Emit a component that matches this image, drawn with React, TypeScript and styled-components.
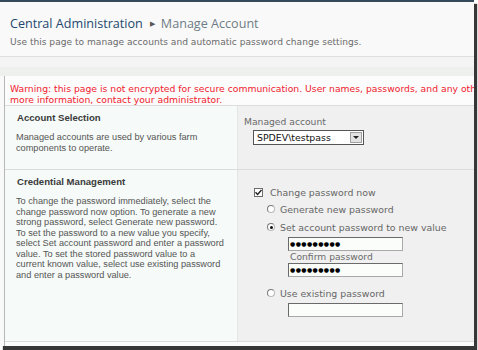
import React from "react";
import styled, { createGlobalStyle } from "styled-components";

const Global = createGlobalStyle`
  html, body { margin: 0; padding: 0; background: #ffffff; }
  body { width: 478px; height: 350px; overflow: hidden; }
`;

const Frame = styled.div`
  width: 474px;
  height: 346px;
  box-sizing: border-box;
  border-top: 2px solid #34495a;
  background: #f8f9f8;
  box-shadow: 3px 4px 1px rgba(20, 20, 20, 0.85);
  overflow: hidden;
  display: flex;
  flex-direction: column;
  font-family: "DejaVu Sans", Verdana, sans-serif;
`;

const Header = styled.div`
  height: 55px;
  box-sizing: border-box;
  padding: 13px 0 0 10px;
  background: #f9f9f9;
  border-bottom: 1px solid #dedede;
`;

const Title = styled.div`
  font-family: "Open Sans", "Noto Sans", sans-serif;
  font-size: 12.6px;
  line-height: 18px;
  color: #6f7c86;
  white-space: nowrap;
`;

const Crumb = styled.span`
  color: #23486e;
`;

const Sep = styled.span`
  font-size: 7px;
  color: #555;
  margin: 0 6px 0 7px;
  vertical-align: 2px;
`;

const Subtitle = styled.div`
  font-size: 9.1px;
  line-height: 12px;
  margin-top: 3px;
  color: #6b6b6b;
  white-space: nowrap;
`;

const Band = styled.div`
  height: 19px;
  background: linear-gradient(#f3f4f3 0, #f3f4f3 10px, #edf0ed 10px, #edf0ed 100%);
`;

const Content = styled.div`
  flex: 1;
  margin-left: 4px;
  border-left: 1px solid #b4b8b8;
  background: #fbfcfb;
  display: flex;
  flex-direction: column;
`;

const Warning = styled.div`
  padding: 8px 0 0 5px;
  height: 30px;
  box-sizing: border-box;
  color: #f0202e;
  font-size: 9.25px;
  line-height: 10.5px;
  white-space: nowrap;
  overflow: hidden;
  border-bottom: 1px solid #dcdcdc;
`;

const Section = styled.div<{ $h: number }>`
  display: grid;
  grid-template-columns: 232px 1fr;
  height: ${(p) => p.$h}px;
  border-bottom: 1px solid #dcdcdc;
`;

const Left = styled.div`
  background: #f6faf8;
  padding: 6px 8px 0 11px;
  font-family: "Liberation Sans", Arial, sans-serif;
`;

const Right = styled.div`
  background: #f0f0f0;
  padding: 0 0 0 6px;
  border-left: 1px solid #e4e4e4;
`;

const SecTitle = styled.div`
  font-weight: bold;
  font-size: 9.6px;
  color: #3a3a3a;
  line-height: 12px;
  margin-left: 1px;
`;

const SecText = styled.div`
  font-size: 9.2px;
  color: #555;
  line-height: 10.5px;
  margin-top: 8px;
`;

const Label = styled.div<{ $indent?: number; $top?: number }>`
  font-size: 9.2px;
  line-height: 12px;
  color: #6a6a6a;
  margin-left: ${(p) => p.$indent ?? 0}px;
  margin-top: ${(p) => p.$top ?? 0}px;
  white-space: nowrap;
`;

const Select = styled.div`
  margin: 2px 0 0 9px;
  width: 111px;
  height: 15px;
  box-sizing: border-box;
  border: 1px solid #555;
  background: #fff;
  display: flex;
  align-items: center;
  font-size: 9.4px;
  color: #111;
  padding-left: 3px;
`;

const SelectText = styled.span`
  flex: 1;
`;

const DropBtn = styled.span`
  width: 12px;
  height: 11px;
  margin-right: 1px;
  background: #e2e2e2;
  border: 1px solid #a0a0a0;
  box-sizing: border-box;
  display: flex;
  align-items: center;
  justify-content: center;
  &::after {
    content: "";
    border-left: 3px solid transparent;
    border-right: 3px solid transparent;
    border-top: 3px solid #222;
  }
`;

const OptRow = styled.div<{ $indent: number; $top: number }>`
  display: flex;
  align-items: center;
  margin-left: ${(p) => p.$indent}px;
  margin-top: ${(p) => p.$top}px;
  height: 12px;
  font-size: 9.4px;
  color: #666;
  white-space: nowrap;
`;

const Check = styled.span`
  width: 9px;
  height: 9px;
  box-sizing: border-box;
  border: 1px solid #6e6e6e;
  background: #fff;
  margin-right: 7px;
  display: flex;
  align-items: center;
  justify-content: center;
`;

const Radio = styled.span<{ $on?: boolean }>`
  width: 8px;
  height: 8px;
  box-sizing: border-box;
  border-radius: 50%;
  border: 1px solid #b8b8b8;
  border-top-color: #7a7a7a;
  border-left-color: #7a7a7a;
  background: #fff;
  margin-right: 5px;
  display: flex;
  align-items: center;
  justify-content: center;
  &::after {
    content: "";
    width: 3px;
    height: 3px;
    border-radius: 50%;
    background: ${(p) => (p.$on ? "#111" : "transparent")};
  }
`;

const Input = styled.div<{ $top: number }>`
  margin: ${(p) => p.$top}px 0 0 44px;
  width: 115px;
  height: 14px;
  box-sizing: border-box;
  border: 1px solid #a8a8a8;
  border-top-color: #6a6a6a;
  border-left-color: #6a6a6a;
  background: #fbfdfb;
  font-size: 6px;
  letter-spacing: 0.4px;
  color: #000;
  line-height: 12px;
  padding-left: 1px;
  font-family: "DejaVu Sans", sans-serif;
`;

export default function App() {
  return (
    <>
      <Global />
      <Frame>
        <Header>
          <Title>
            <Crumb>Central Administration</Crumb>
            <Sep>▶</Sep>Manage Account
          </Title>
          <Subtitle>Use this page to manage accounts and automatic password change settings.</Subtitle>
        </Header>
        <Band />
        <Content>
          <Warning>
            <div>
              Warning: this page is not encrypted for secure communication. User names, passwords, and any other
            </div>
            <div>more information, contact your administrator.</div>
          </Warning>
          <Section $h={63}>
            <Left>
              <SecTitle>Account Selection</SecTitle>
              <SecText>
                Managed accounts are used by various farm
                <br />
                components to operate.
              </SecText>
            </Left>
            <Right>
              <Label $top={10}>Managed account</Label>
              <Select>
                <SelectText>SPDEV\testpass</SelectText>
                <DropBtn />
              </Select>
            </Right>
          </Section>
          <Section $h={171}>
            <Left>
              <SecTitle>Credential Management</SecTitle>
              <SecText>
                To change the password immediately, select the
                <br />
                change password now option. To generate a new
                <br />
                strong password, select Generate new password.
                <br />
                To set the password to a new value you specify,
                <br />
                select Set account password and enter a password
                <br />
                value. To set the stored password value to a
                <br />
                current known value, select use existing password
                <br />
                and enter a password value.
              </SecText>
            </Left>
            <Right>
              <OptRow $indent={10} $top={16}>
                <Check>
                  <svg width="7" height="7" viewBox="0 0 7 7">
                    <path d="M0.5 3.2 L2.6 5.4 L6.5 1" stroke="#222" strokeWidth="1.4" fill="none" />
                  </svg>
                </Check>
                Change password now
              </OptRow>
              <OptRow $indent={23} $top={5}>
                <Radio />
                Generate new password
              </OptRow>
              <OptRow $indent={23} $top={6}>
                <Radio $on />
                Set account password to new value
              </OptRow>
              <Input $top={4}>●●●●●●●●●</Input>
              <Label $indent={46} $top={0}>Confirm password</Label>
              <Input $top={0}>●●●●●●●●●</Input>
              <OptRow $indent={23} $top={10}>
                <Radio />
                Use existing password
              </OptRow>
              <Input $top={4}></Input>
            </Right>
          </Section>
        </Content>
      </Frame>
    </>
  );
}
